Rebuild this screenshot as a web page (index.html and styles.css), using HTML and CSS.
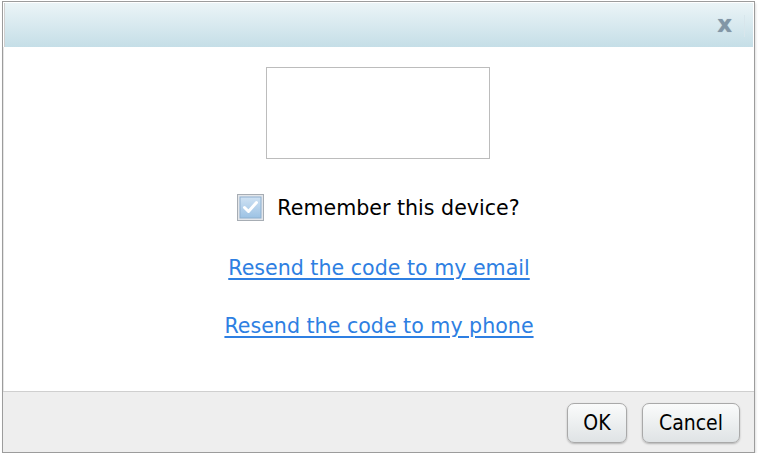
FILE: index.html
```html
<!DOCTYPE html>
<html>
<head>
<meta charset="utf-8">
<link rel="stylesheet" href="styles.css">
</head>
<body>
<div class="dialog">
  <div class="header">
    <span class="sep"></span>
    <span class="close">x</span>
  </div>
  <div class="content">
    <div class="codebox"></div>
    <label class="remember">
      <span class="check">
        <svg width="27" height="27" viewBox="0 0 27 27">
          <defs>
            <linearGradient id="cb" x1="0" y1="0" x2="0" y2="1">
              <stop offset="0" stop-color="#cfe2f3"/>
              <stop offset="1" stop-color="#9cc2e4"/>
            </linearGradient>
          </defs>
          <rect x="0.5" y="0.5" width="26" height="26" fill="#e3e6ea" stroke="#a7adb4"/>
          <rect x="3" y="3" width="21" height="21" fill="url(#cb)" stroke="#8fb0cf" stroke-width="1"/>
          <path d="M7.5 13.5 L11.5 17.5 L19.5 8.5" fill="none" stroke="#ffffff" stroke-width="3" stroke-linecap="round" stroke-linejoin="round"/>
        </svg>
      </span>
      <span class="label">Remember this device?</span>
    </label>
    <a class="link first" href="#">Resend the code to my email</a>
    <a class="link second" href="#">Resend the code to my phone</a>
  </div>
  <div class="footer">
    <button class="btn ok">OK</button>
    <button class="btn cancel">Cancel</button>
  </div>
</div>
</body>
</html>
```
FILE: styles.css
```css
html, body {
  margin: 0;
  padding: 0;
  background: #ffffff;
}
body {
  padding: 1px 4px 0 2px;
  font-family: "DejaVu Sans", Verdana, sans-serif;
}
.dialog {
  box-sizing: border-box;
  width: 753px;
  height: 452px;
  border: 1px solid #9c9c9c;
  display: flex;
  flex-direction: column;
  background: #ffffff;
  box-shadow: 1px 2px 2px rgba(0,0,0,0.12);
}
.header {
  height: 44px;
  margin: 1px 1px 0 1px;
  border-left: 1px solid #d0d0d0;
  background: linear-gradient(#ebf4f7, #c5dee7);
  display: flex;
  justify-content: flex-end;
  align-items: center;
  position: relative;
}
.sep {
  position: absolute;
  right: 8px;
  top: 12px;
  width: 1px;
  height: 22px;
  background: #d8e6ec;
}
.close {
  font-family: "DejaVu Sans", sans-serif;
  font-weight: bold;
  font-size: 23px;
  color: #8296a6;
  margin-right: 21px;
  margin-top: -3px;
  text-shadow: 0 0 1px #9fb0bd;
}
.content {
  flex: 1;
  display: flex;
  flex-direction: column;
  align-items: center;
  border-left: 1px solid #e6e6e6;
}
.codebox {
  box-sizing: border-box;
  width: 224px;
  height: 92px;
  border: 1px solid #bcbcbc;
  margin-top: 20px;
  margin-left: -2px;
}
.remember {
  display: flex;
  align-items: center;
  margin-top: 35px;
  height: 27px;
  margin-left: -1px;
}
.check {
  display: block;
  width: 27px;
  height: 27px;
  margin-right: 13px;
}
.check svg { display: block; }
.label {
  font-size: 20.6px;
  color: #000000;
  line-height: 24px;
}
.link {
  font-size: 20.6px;
  line-height: 24px;
  color: #2e7fe2;
  text-decoration: underline;
  text-underline-offset: 3px;
}
.link.first {
  margin-top: 35px;
}
.link.second {
  margin-top: 34px;
}
.footer {
  height: 59px;
  border-top: 1px solid #cfcfcf;
  background: #eeeeee;
  display: flex;
  justify-content: flex-end;
  align-items: center;
  gap: 15px;
  padding-right: 14px;
  padding-top: 1px;
}
.btn {
  box-sizing: border-box;
  height: 40px;
  border: 1px solid #a9a9a9;
  border-radius: 7px;
  background: linear-gradient(#fafbfb, #dfe3e5);
  box-shadow: 0 1px 2px rgba(0,0,0,0.25);
  font-family: "DejaVu Sans Condensed", "DejaVu Sans", sans-serif;
  font-size: 21px;
  color: #000000;
  padding: 0;
}
.ok { width: 60px; }
.cancel { width: 98px; }
```
